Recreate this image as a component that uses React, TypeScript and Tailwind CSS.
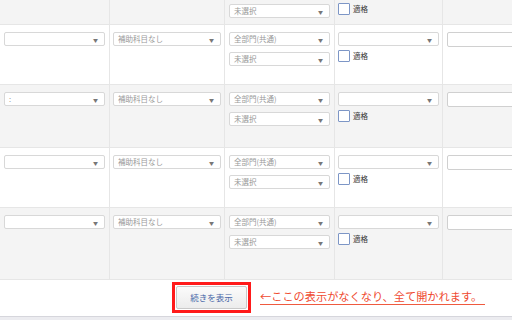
const font = { fontFamily: '"Noto Sans CJK JP", "Noto Sans", sans-serif' };

function Select({ label = "", className = "" }: { label?: string; className?: string }) {
  return (
    <div
      className={`h-[14px] border border-[#d8d8d8] rounded-[2px] bg-white flex items-center justify-between pl-[4px] pr-[6px] ${className}`}
    >
      <span className="text-[7.5px] leading-none text-[#999]">{label}</span>
      <span className="text-[5px] leading-none text-[#777]">▼</span>
    </div>
  );
}

function Check() {
  return (
    <div className="flex items-center">
      <div className="w-[12px] h-[12px] border border-[#7d96c6] rounded-[1px] bg-white" />
      <span className="ml-[3px] text-[7.5px] leading-none text-[#333]">適格</span>
    </div>
  );
}

function Row({ gray, height, first }: { gray: boolean; height: string; first?: string }) {
  return (
    <div
      className={`grid grid-cols-[110px_115px_110px_108px_1fr] border-b border-[#e6e6e6] ${height} ${
        gray ? "bg-[#f4f4f4]" : "bg-white"
      }`}
    >
      <div className="border-r border-[#e6e6e6] pt-[7px] pl-[4px] pr-[4px]">
        <Select label={first ?? ""} />
      </div>
      <div className="border-r border-[#e6e6e6] pt-[7px] pl-[3px] pr-[3px]">
        <Select label="補助科目なし" />
      </div>
      <div className="border-r border-[#e6e6e6] pt-[7px] pl-[4px] pr-[4px] flex flex-col gap-[6px]">
        <Select label="全部門(共通)" />
        <Select label="未選択" />
      </div>
      <div className="border-r border-[#e6e6e6] pt-[7px] pl-[3px] pr-[3px] flex flex-col gap-[4px]">
        <Select />
        <Check />
      </div>
      <div className="pt-[7px] pl-[4px]">
        <div className="h-[15px] w-[120px] border border-[#d0d0d0] rounded-[2px] bg-white" />
      </div>
    </div>
  );
}

export default function App() {
  return (
    <div className="w-[512px] h-[320px] overflow-hidden bg-white" style={font}>
      {/* tail of the previous row */}
      <div className="grid grid-cols-[110px_115px_110px_108px_1fr] border-b border-[#e6e6e6] h-[25px] bg-[#f4f4f4]">
        <div className="border-r border-[#e6e6e6]" />
        <div className="border-r border-[#e6e6e6]" />
        <div className="border-r border-[#e6e6e6] pt-[4px] pl-[4px] pr-[4px]">
          <Select label="未選択" />
        </div>
        <div className="border-r border-[#e6e6e6] pt-[3px] pl-[3px]">
          <Check />
        </div>
        <div />
      </div>

      <Row gray={false} height="h-[60px]" />
      <Row gray={true} height="h-[63px]" first=":" />
      <Row gray={false} height="h-[60px]" />
      <Row gray={true} height="h-[72px]" />

      {/* footer */}
      <div className="h-[36px] flex items-start">
        <div className="ml-[172px] mt-[2px] w-[79px] h-[31px] border-[3px] border-[#ff1a1a] p-[1px] flex">
          <button className="flex-1 border border-[#c9c9c9] rounded-[2px] bg-gradient-to-b from-[#fbfbfb] to-[#ececec] text-[8.5px] text-[#4867a8] leading-none">
            続きを表示
          </button>
        </div>
        <div className="ml-[9px] mt-[9px] border-b border-[#ef5a3f] pr-[3px] text-[11.2px] leading-[15px] text-[#ef4a30]">
          ←ここの表示がなくなり、全て開かれます。
        </div>
      </div>
      <div className="h-[4px] border-t border-[#d6d6dc] bg-[#ececf0]" />
    </div>
  );
}
